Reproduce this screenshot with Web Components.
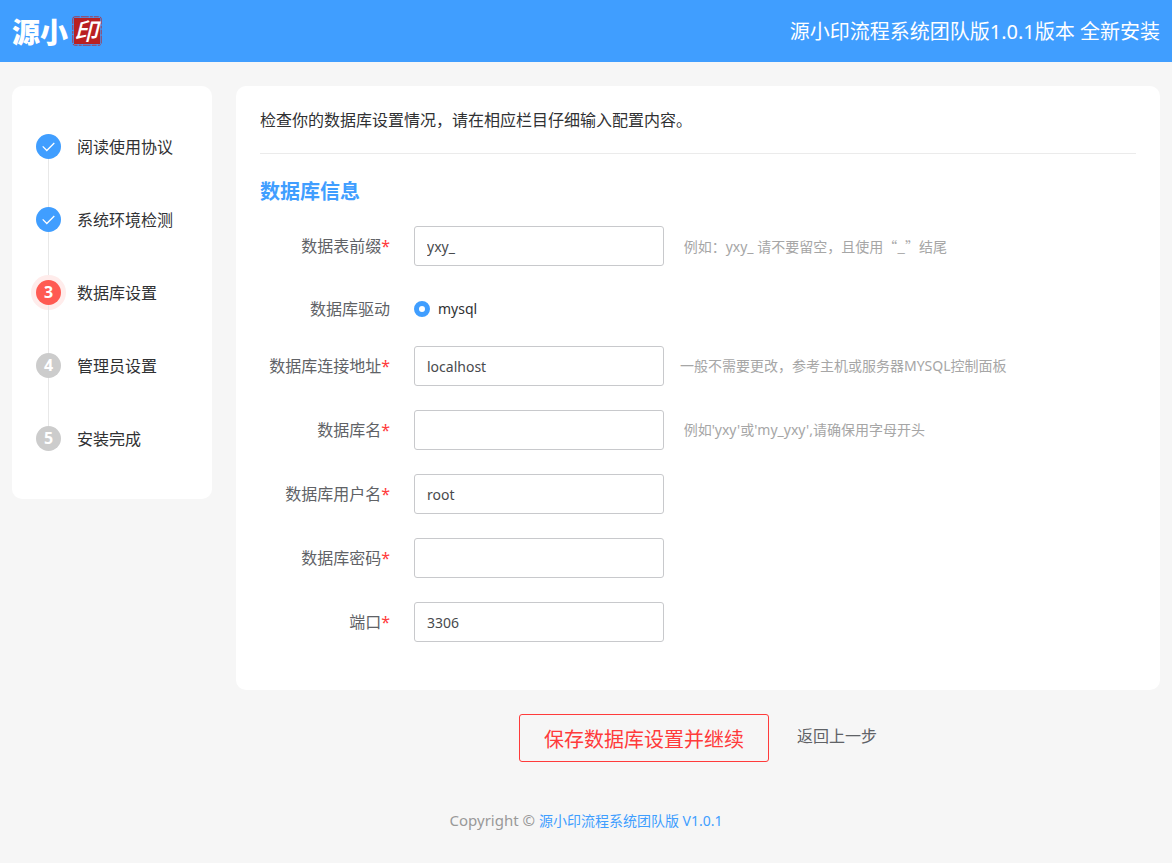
<!DOCTYPE html>
<html lang="zh-CN">
<head>
<meta charset="utf-8">
<meta name="viewport" content="width=device-width, initial-scale=1">
<title>源小印流程系统 安装向导</title>
<style>
  body {
    margin: 0;
    background: #f6f6f6;
    color: #303133;
    font: 16px/24px "Noto Sans", "Noto Sans CJK SC", sans-serif;
  }
</style>
</head>
<body>
<install-app></install-app>
<script>
  const define = (name, html, setup) => {
    const template = document.createElement('template');
    template.innerHTML = html;
    customElements.define(name, class extends HTMLElement {
      constructor() {
        super();
        this.attachShadow({ mode: 'open' }).append(template.content.cloneNode(true));
      }
      connectedCallback() {
        if (setup) setup(this, this.shadowRoot);
      }
    });
  };

  define('brand-logo', `
    <style>
      :host { display: flex; align-items: center; gap: 4px; color: #fff; }
      .name { font-size: 28px; line-height: 32px; font-weight: 900; font-family: "Noto Sans CJK SC", sans-serif; }
      svg { display: block; overflow: visible; }
      text { font: italic 500 24px "Noto Sans CJK SC", sans-serif; fill: #fff; }
    </style>
    <span class="name">源小</span>
    <svg width="30" height="30" viewBox="0 0 30 30" role="img" aria-label="印">
      <rect x="2" y="2" width="26" height="26" fill="#b92021"/>
      <rect x=".8" y=".8" width="28.4" height="28.4" rx="2" fill="none" stroke="#a5374a" stroke-width="1" stroke-dasharray="5 1 8 1 3 1"/>
      <text x="14" y="24" text-anchor="middle">印</text>
    </svg>`);

  define('app-header', `
    <style>
      :host {
        display: flex; align-items: center; justify-content: space-between;
        height: 62px; padding: 0 12px; box-sizing: border-box;
        background: #409eff; color: #fff; font-size: 20px; line-height: 28px;
      }
      .title { padding-top: 2px; }
    </style>
    <brand-logo></brand-logo>
    <span class="title"><slot></slot></span>`);

  define('step-item', `
    <style>
      :host { display: flex; align-items: center; gap: 16px; height: 25px; }
      .dot {
        display: flex; align-items: center; justify-content: center;
        width: 25px; height: 25px; border-radius: 50%;
        background: #ccc; color: #fff; font-weight: 700; line-height: 25px;
      }
      svg { display: none; }
      :host([state="done"]) .dot { background: #409eff; }
      :host([state="done"]) svg { display: block; }
      :host([state="active"]) .dot { background: #ff5a52; box-shadow: 0 0 0 5px #ffeceb; }
    </style>
    <span class="dot"><span class="num"></span><svg width="13" height="10" viewBox="0 0 13 10" fill="none" stroke="#fff" stroke-width="1.3"><path d="M.7 4.4 4.8 8.5 12.3 1"/></svg></span>
    <slot></slot>`, (host, root) => {
    root.querySelector('.num').textContent = host.getAttribute('number') || '';
  });

  define('step-list', `
    <style>
      :host {
        display: flex; flex-direction: column; box-sizing: border-box;
        width: 200px; flex: none; padding: 48px 24px;
        background: #fff; border-radius: 10px;
      }
      .line { width: 1px; height: 48px; margin-left: 12px; background: #e8e8e8; }
    </style>
    <step-item state="done">阅读使用协议</step-item>
    <div class="line"></div>
    <step-item state="done">系统环境检测</step-item>
    <div class="line"></div>
    <step-item state="active" number="3">数据库设置</step-item>
    <div class="line"></div>
    <step-item number="4">管理员设置</step-item>
    <div class="line"></div>
    <step-item number="5">安装完成</step-item>`);

  define('text-field', `
    <style>
      :host { display: flex; align-items: center; height: 40px; }
      label { width: 130px; margin-right: 24px; text-align: right; color: #606266; white-space: nowrap; flex: none; }
      i { font-style: normal; color: #ff3b3b; }
      input {
        width: 250px; height: 40px; box-sizing: border-box; padding: 0 12px; flex: none;
        border: 1px solid #c8c9cc; border-radius: 3px; background: #fff; outline: none;
        color: #484a4d; font: inherit; font-size: 14px;
      }
      .hint { margin-left: 16px; color: #a6a6a6; font-size: 14px; white-space: nowrap; }
    </style>
    <label for="field"><span class="text"></span><i>*</i></label>
    <input id="field">
    <span class="hint"><slot></slot></span>`, (host, root) => {
    root.querySelector('.text').textContent = host.getAttribute('label');
    const input = root.querySelector('input');
    input.type = host.getAttribute('type') || 'text';
    input.value = host.getAttribute('value') || '';
  });

  define('radio-field', `
    <style>
      :host { display: flex; align-items: center; height: 26px; padding-top: 6px; }
      .caption { width: 130px; margin-right: 24px; text-align: right; color: #606266; }
      label { display: flex; align-items: center; gap: 8px; font-size: 14px; }
      input {
        appearance: none; margin: 0; width: 16px; height: 16px;
        border: 5px solid #409eff; border-radius: 50%; background: #fff;
      }
    </style>
    <span class="caption">数据库驱动</span>
    <label><input type="radio" name="driver" value="mysql" checked>mysql</label>`);

  define('database-panel', `
    <style>
      :host { display: block; background: #fff; border-radius: 10px; padding: 24px 24px 48px; }
      p { margin: 0; padding: 0 0 22px; line-height: 21px; border-bottom: 1px solid #ebebeb; }
      h2 { margin: 24px 0 20px; font-size: 20px; line-height: 28px; color: #409eff; }
      form { display: flex; flex-direction: column; gap: 24px; }
      .cjk { font-family: "Noto Sans CJK SC", sans-serif; }
    </style>
    <p>检查你的数据库设置情况，请在相应栏目仔细输入配置内容。</p>
    <h2>数据库信息</h2>
    <form>
      <text-field label="数据表前缀" value="yxy_">&nbsp;例如：yxy_ 请不要留空，且使用<span class="cjk">“_”</span>结尾</text-field>
      <radio-field></radio-field>
      <text-field label="数据库连接地址" value="localhost">一般不需要更改，参考主机或服务器MYSQL控制面板</text-field>
      <text-field label="数据库名">&nbsp;例如'yxy'或'my_yxy',请确保用字母开头</text-field>
      <text-field label="数据库用户名" value="root"></text-field>
      <text-field label="数据库密码" type="password"></text-field>
      <text-field label="端口" value="3306"></text-field>
    </form>`);

  define('form-actions', `
    <style>
      :host { display: flex; justify-content: center; align-items: center; gap: 28px; }
      button {
        width: 250px; height: 48px; padding: 4px 0 0; background: transparent; cursor: pointer;
        border: 1px solid #ff3b3b; border-radius: 3px; color: #ff3b3b; font: inherit; font-size: 20px;
      }
      a { color: #606266; text-decoration: none; padding-bottom: 4px; }
    </style>
    <button type="button">保存数据库设置并继续</button>
    <a href="#">返回上一步</a>`);

  define('app-footer', `
    <style>
      :host { display: block; text-align: center; font-size: 15px; line-height: 24px; color: #999; padding: 22px 12px 28px; }
      a { color: #409eff; text-decoration: none; font-size: 14px; }
    </style>
    Copyright © <a href="#">源小印流程系统团队版 V1.0.1</a>`);

  define('install-app', `
    <style>
      :host { display: block; }
      .layout { display: flex; align-items: flex-start; gap: 24px; padding: 24px 12px; }
      main { flex: 1; min-width: 0; display: flex; flex-direction: column; gap: 24px; }
    </style>
    <app-header>源小印流程系统团队版1.0.1版本 全新安装</app-header>
    <div class="layout">
      <step-list></step-list>
      <main>
        <database-panel></database-panel>
        <form-actions></form-actions>
      </main>
    </div>
    <app-footer></app-footer>`);
</script>
</body>
</html>
